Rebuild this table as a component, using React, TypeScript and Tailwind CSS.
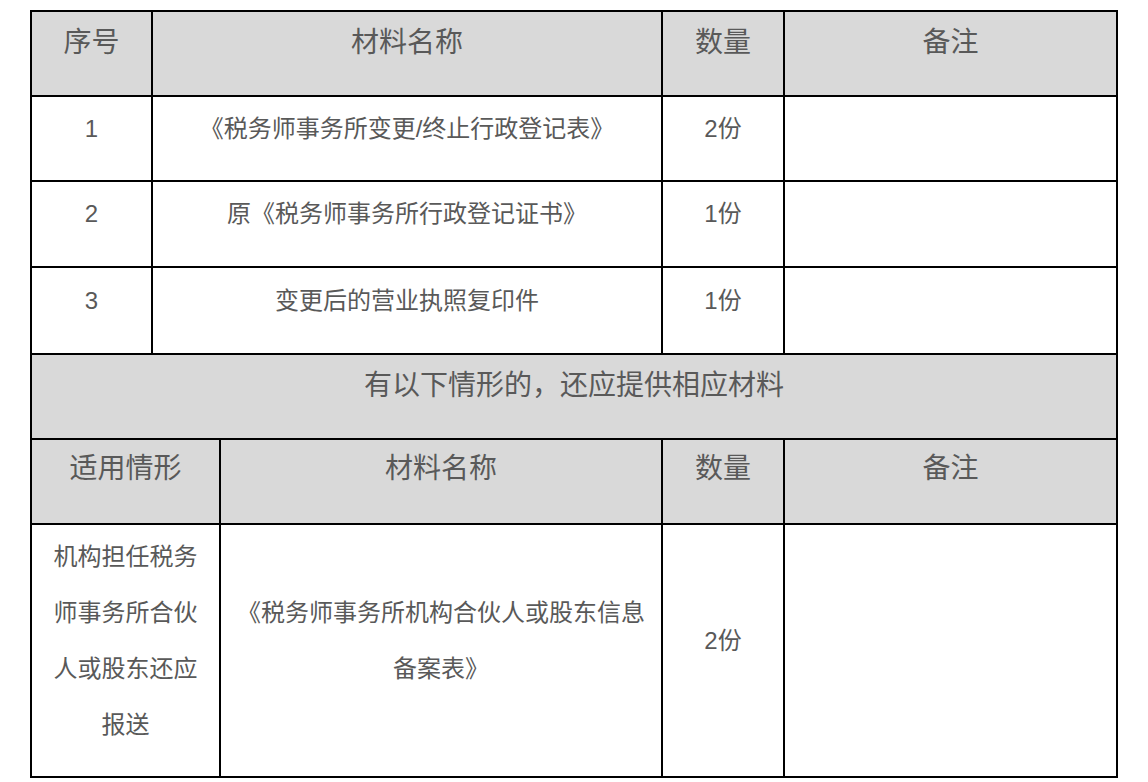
import { Fragment } from "react";

const font = { fontFamily: '"Liberation Sans", "Noto Sans CJK SC", sans-serif' };

const Head = ({ children, className = "" }: { children: React.ReactNode; className?: string }) => (
  <div className={`bg-[#d9d9d9] flex items-center justify-center pb-[22px] px-3 text-[28px] leading-[40px] text-[#595959] text-center ${className}`}>
    {children}
  </div>
);

const Cell = ({ children, className = "" }: { children?: React.ReactNode; className?: string }) => (
  <div className={`bg-white flex items-center justify-center pb-[20px] px-3 text-[24px] leading-[56px] text-[#595959] text-center ${className}`}>
    {children}
  </div>
);

const rows = [
  { no: "1", name: "《税务师事务所变更/终止行政登记表》", qty: "2份" },
  { no: "2", name: "原《税务师事务所行政登记证书》", qty: "1份" },
  { no: "3", name: "变更后的营业执照复印件", qty: "1份" },
];

export default function App() {
  return (
    <div className="w-[1148px] h-[782px] bg-white pt-[10px] pl-[30px]" style={font}>
      <div className="w-[1088px] bg-black p-[2px] grid grid-cols-[119px_66px_440px_120px_331px] grid-rows-[83px_83px_84px_85px_83px_83px_251px] gap-[2px]">
        {/* first table */}
        <Head>序号</Head>
        <Head className="col-span-2">材料名称</Head>
        <Head>数量</Head>
        <Head>备注</Head>
        {rows.map((r) => (
          <Fragment key={r.no}>
            <Cell>{r.no}</Cell>
            <Cell className="col-span-2">{r.name}</Cell>
            <Cell>{r.qty}</Cell>
            <Cell />
          </Fragment>
        ))}

        {/* extra materials */}
        <Head className="col-span-5 text-[26px]">有以下情形的，还应提供相应材料</Head>
        <Head className="col-span-2 pb-[26px]">适用情形</Head>
        <Head className="pb-[26px]">材料名称</Head>
        <Head className="pb-[26px]">数量</Head>
        <Head className="pb-[26px]">备注</Head>
        <Cell className="col-span-2">机构担任税务师事务所合伙人或股东还应报送</Cell>
        <Cell>《税务师事务所机构合伙人或股东信息备案表》</Cell>
        <Cell>2份</Cell>
        <Cell />
      </div>
    </div>
  );
}
